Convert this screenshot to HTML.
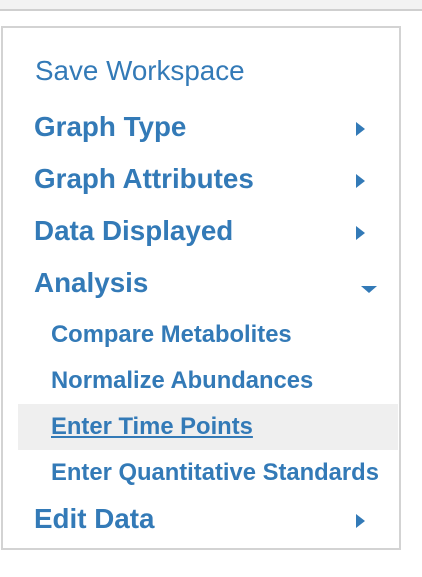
<!DOCTYPE html>
<html><head><style>
body{margin:0;width:422px;height:577px;background:#fff;font-family:"Liberation Sans",sans-serif;position:relative;overflow:hidden}
.top{position:absolute;left:0;top:0;width:422px;height:9px;background:#f2f2f2;border-bottom:2px solid #cfcfcf}
.box{position:absolute;left:1px;top:26px;width:396px;height:520px;border:2px solid #d3d3d3}
.t{position:absolute;color:#337ab7;white-space:nowrap;line-height:1}
.h{font-size:27.8px;font-weight:bold;left:34px}
.s{font-size:23.8px;font-weight:bold;left:51px}
.hl{position:absolute;left:18px;top:404px;width:380px;height:46px;background:#efefef}
.ar{position:absolute;left:356px;width:0;height:0;border-top:7px solid transparent;border-bottom:7px solid transparent;border-left:9px solid #337ab7}
.dn{position:absolute;left:361px;top:286px;width:0;height:0;border-left:8px solid transparent;border-right:8px solid transparent;border-top:7px solid #337ab7}
</style></head><body>
<div class="top"></div>
<div class="box"></div>
<div class="hl"></div>
<div class="t" style="left:35px;top:57px;font-size:27.8px">Save Workspace</div>
<div class="t h" style="top:113px">Graph Type</div>
<div class="t h" style="top:165px">Graph Attributes</div>
<div class="t h" style="top:217px">Data Displayed</div>
<div class="t h" style="top:269px">Analysis</div>
<div class="t s" style="top:323px">Compare Metabolites</div>
<div class="t s" style="top:369px">Normalize Abundances</div>
<div class="t s" style="top:415px;text-decoration:underline">Enter Time Points</div>
<div class="t s" style="top:461px">Enter Quantitative Standards</div>
<div class="t h" style="top:505px">Edit Data</div>
<div class="ar" style="top:122px"></div>
<div class="ar" style="top:174px"></div>
<div class="ar" style="top:226px"></div>
<div class="dn"></div>
<div class="ar" style="top:514px"></div>
</body></html>
